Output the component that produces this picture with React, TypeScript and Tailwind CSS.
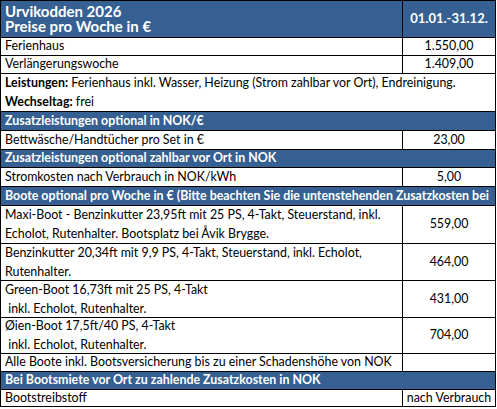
import React from "react";

const BLUE = "bg-[#366092]";

function Row({
  label,
  value,
  h,
}: {
  label: React.ReactNode;
  value?: React.ReactNode;
  h: string;
}) {
  return (
    <>
      <div className={`${h} flex flex-col justify-center border-r border-b border-black px-[4px] whitespace-nowrap overflow-hidden`}>
        {label}
      </div>
      <div className={`${h} flex items-center justify-center border-r border-b border-black whitespace-nowrap overflow-hidden`}>
        {value}
      </div>
    </>
  );
}

function Band({ children, h }: { children: React.ReactNode; h: string }) {
  return (
    <div className={`${h} col-span-2 flex items-center ${BLUE} border-r border-b border-black px-[4px] font-bold text-white whitespace-nowrap overflow-hidden`}>
      {children}
    </div>
  );
}

function Lines({ lines }: { lines: string[] }) {
  return (
    <div className="flex flex-col gap-[1px] leading-[18px]">
      {lines.map((l) => (
        <span key={l}>{l}</span>
      ))}
    </div>
  );
}

export default function App() {
  return (
    <div className="w-[497px] h-[409px] bg-white text-black font-['Lato','Liberation_Sans',sans-serif] text-[12.4px]">
      <div className="grid grid-cols-[402px_93px] border-t border-l border-black w-[496px]">
        <div className={`h-[37px] ${BLUE} border-r border-b border-black px-[4px] flex flex-col justify-center font-bold text-white text-[15px] leading-[15px]`}>
          <span>Urvikodden 2026</span>
          <span>Preise pro Woche in €</span>
        </div>
        <div className={`h-[37px] ${BLUE} border-r border-b border-black flex items-center justify-center font-bold text-white text-[13px]`}>
          01.01.-31.12.
        </div>

        <Row h="h-[18px]" label="Ferienhaus" value="1.550,00" />
        <Row h="h-[18px]" label="Verlängerungswoche" value="1.409,00" />

        <div className="h-[38px] col-span-2 flex flex-col justify-center gap-[1px] border-r border-b border-black px-[4px] leading-[18px] whitespace-nowrap">
          <span>
            <b>Leistungen:</b> Ferienhaus inkl. Wasser, Heizung (Strom zahlbar vor Ort), Endreinigung.
          </span>
          <span>
            <b>Wechseltag:</b> frei
          </span>
        </div>

        <Band h="h-[19px]">Zusatzleistungen optional in NOK/€</Band>
        <Row h="h-[19px]" label="Bettwäsche/Handtücher pro Set in €" value="23,00" />
        <Band h="h-[18px]">Zusatzleistungen optional zahlbar vor Ort in NOK</Band>
        <Row h="h-[19px]" label="Stromkosten nach Verbrauch in NOK/kWh" value="5,00" />
        <Band h="h-[19px]">Boote optional pro Woche in € (Bitte beachten Sie die untenstehenden Zusatzkosten bei</Band>

        <Row
          h="h-[38px]"
          label={<Lines lines={["Maxi-Boot - Benzinkutter 23,95ft mit 25 PS, 4-Takt, Steuerstand, inkl.", "Echolot, Rutenhalter. Bootsplatz bei Åvik Brygge."]} />}
          value="559,00"
        />
        <Row
          h="h-[37px]"
          label={<Lines lines={["Benzinkutter 20,34ft mit 9,9 PS, 4-Takt, Steuerstand, inkl. Echolot,", "Rutenhalter."]} />}
          value="464,00"
        />
        <Row
          h="h-[37px]"
          label={<Lines lines={["Green-Boot 16,73ft mit 25 PS, 4-Takt", "\u00a0inkl. Echolot, Rutenhalter."]} />}
          value="431,00"
        />
        <Row
          h="h-[36px]"
          label={<Lines lines={["Øien-Boot 17,5ft/40 PS, 4-Takt", "\u00a0inkl. Echolot, Rutenhalter. "]} />}
          value="704,00"
        />
        <Row h="h-[18px]" label="Alle Boote inkl. Bootsversicherung bis zu einer Schadenshöhe von NOK" value="" />
        <Band h="h-[18px]">Bei Bootsmiete vor Ort zu zahlende Zusatzkosten in NOK</Band>
        <Row h="h-[17px]" label="Bootstreibstoff" value="nach Verbrauch" />
      </div>
    </div>
  );
}
